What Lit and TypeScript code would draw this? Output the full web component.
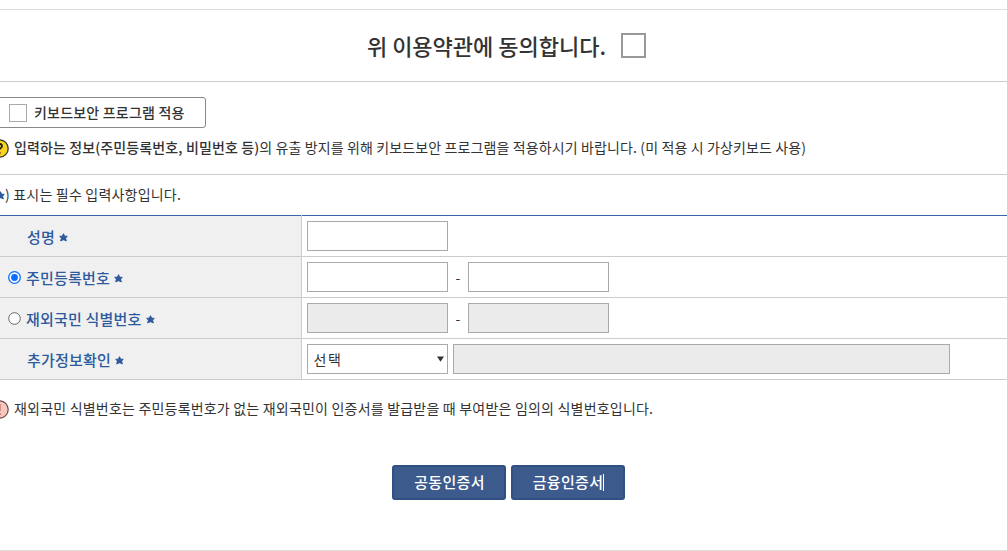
import { LitElement, html, css } from "lit";
import { customElement } from "lit/decorators.js";

@customElement("app-root")
export class AppRoot extends LitElement {
  static styles = css`
    :host { display: block; height: 551px; width: 1007px; overflow: hidden; background: #fff; color: #333;
      font-family: "Noto Sans CJK KR", "Noto Sans", sans-serif; font-size: 14px; }
    * { box-sizing: border-box; }
    .page { padding-top: 9px; height: 551px; display: flex; flex-direction: column; }
    .page > * { flex: none; }
    .agree { height: 73px; border-top: 1px solid #ddd; border-bottom: 1px solid #ccc; display: flex; align-items: center;
      justify-content: center; gap: 15px; padding-left: 6px; }
    .agree span { font-size: 22px; font-weight: 500; color: #333; line-height: 26px; padding-bottom: 2px; }
    .agree i { width: 25px; height: 25px; border: 2px solid #999; display: block; background: #fff; }
    .kb { margin: 15px 0 0 -10px; width: 216px; height: 31px; border: 1px solid #888; border-radius: 3px; display: flex;
      align-items: center; padding-left: 18px; gap: 7px; font-weight: 500; letter-spacing: 0.2px; }
    .kb span { padding-bottom: 2px; }
    .kb i { width: 18px; height: 18px; border: 1px solid #aaa; display: block; }
    .msg { display: flex; align-items: center; gap: 5px; margin-left: -10px; line-height: 20px; white-space: nowrap; }
    .msg span { padding-bottom: 2px; }
    .msg svg { flex: none; width: 19px; height: 19px; }
    .m1 { margin-top: 10px; height: 20px; letter-spacing: 0.12px; }
    .m1 b { font-weight: 500; }
    .hr { border-top: 1px solid #ccc; margin-top: 16px; }
    .req { display: flex; align-items: center; height: 20px; margin-top: 10px; margin-left: -4px; white-space: nowrap; letter-spacing: 0.2px; }
    .req span { padding-bottom: 2px; }
    .sv { width: 9px; height: 9px; flex: none; }
    table { margin-top: 10px; width: 1007px; border-collapse: collapse; border-top: 1px solid #3a66a8; table-layout: fixed; }
    td { height: 41px; border-bottom: 1px solid #ccc; padding: 0; }
    td.l { width: 301px; background: #f0f0f0; border-right: 1px solid #ccc; color: #2c5a9e; font-weight: 500; font-size: 15px; letter-spacing: 0.2px; }
    td.r { padding-left: 5px; }
    .lab { display: flex; align-items: center; gap: 4px; padding-left: 8px; white-space: nowrap; }
    .lab.np { padding-left: 27px; }
    .lab .rd { width: 13px; height: 13px; flex: none; margin-right: 1px; }
    .lab .sv { margin-top: 3px; }
    .cell { display: flex; align-items: center; }
    .inp { width: 141px; height: 30px; border: 1px solid #aaa; background: #fff; }
    .inp.d { background: #ebebeb; }
    .dash { width: 20px; text-align: center; color: #333; padding-left: 1px; }
    .sel { width: 141px; height: 30px; border: 1px solid #aaa; display: flex; align-items: center; padding: 0 3px 0 6px; justify-content: space-between; font-size: 14px; letter-spacing: 1.5px; }
    .sel svg { width: 7px; height: 6px; }
    .wide { width: 497px; margin-left: 5px; height: 30px; border: 1px solid #aaa; background: #ebebeb; }
    .m2 { margin-top: 19px; height: 20px; letter-spacing: 0.2px; }
    .btns { display: flex; gap: 5px; padding-left: 392px; margin-top: 46px; }
    .btn { width: 114px; height: 35px; border: 2px solid #2f4f85; border-radius: 3px; background: #3d5a8c; color: #fff; font-weight: 500;
      font-size: 15px; letter-spacing: 0.3px; display: flex; align-items: center; justify-content: center; padding-left: 1px; }
    .btn span:first-child { padding-bottom: 3px; }
    .caret { display: block; width: 1px; height: 17px; background: #fff; }
    .bottom { margin-top: 50px; border-top: 1px solid #ddd; }
  `;

  private star() {
    return html`<svg class="sv" viewBox="0 0 10 10"><path d="M5 1l1.2 2.7 2.8-.1-1.9 2.1 1 2.9L5 7.2 1.9 8.6l1-2.9L1 3.6l2.8.1z" fill="#2e5a9c" stroke="#2e5a9c" stroke-width="1.2" stroke-linejoin="round"/></svg>`;
  }

  render() {
    return html`<div class="page">
      <div class="agree"><span>위 이용약관에 동의합니다.</span><i></i></div>
      <div class="kb"><i></i><span>키보드보안 프로그램 적용</span></div>
      <div class="msg m1">
        <svg viewBox="0 0 19 19"><circle cx="9.5" cy="9.5" r="8.7" fill="#fbd21e" stroke="#333" stroke-width="1.3"/><path d="M7 7.2c0-3 5-3 5 0 0 1.8-2.5 1.8-2.5 3.6" fill="none" stroke="#222" stroke-width="1.8"/><circle cx="9.5" cy="14" r="1.1" fill="#222"/></svg>
        <span><b>입력하는 정보(주민등록번호, 비밀번호 등)</b>의 유출 방지를 위해 키보드보안 프로그램을 적용하시기 바랍니다. (미 적용 시 가상키보드 사용)</span>
      </div>
      <div class="hr"></div>
      <div class="req">${this.star()}<span>) 표시는 필수 입력사항입니다.</span></div>
      <table>
        <tr>
          <td class="l"><div class="lab np"><span>성명</span>${this.star()}</div></td>
          <td class="r"><div class="cell"><div class="inp"></div></div></td>
        </tr>
        <tr>
          <td class="l"><div class="lab"><svg class="rd" viewBox="0 0 13 13"><circle cx="6.5" cy="6.5" r="5.8" fill="#fff" stroke="#0a6cff" stroke-width="1.3"/><circle cx="6.5" cy="6.5" r="3.4" fill="#0a6cff"/></svg><span>주민등록번호</span>${this.star()}</div></td>
          <td class="r"><div class="cell"><div class="inp"></div><span class="dash">-</span><div class="inp"></div></div></td>
        </tr>
        <tr>
          <td class="l"><div class="lab"><svg class="rd" viewBox="0 0 13 13"><circle cx="6.5" cy="6.5" r="5.8" fill="#fff" stroke="#666" stroke-width="1"/></svg><span>재외국민 식별번호</span>${this.star()}</div></td>
          <td class="r"><div class="cell"><div class="inp d"></div><span class="dash">-</span><div class="inp d"></div></div></td>
        </tr>
        <tr>
          <td class="l"><div class="lab np"><span>추가정보확인</span>${this.star()}</div></td>
          <td class="r"><div class="cell"><div class="sel"><span>선택</span><svg viewBox="0 0 8 6"><path d="M0 0h8L4 6z" fill="#333"/></svg></div><div class="wide"></div></div></td>
        </tr>
      </table>
      <div class="msg m2">
        <svg viewBox="0 0 19 19"><circle cx="9.5" cy="9.5" r="8.7" fill="#f6c9c0" stroke="#6a4a44" stroke-width="1.2"/><path d="M9.5 4v7" stroke="#b03020" stroke-width="1.8"/><circle cx="9.5" cy="14" r="1.1" fill="#b03020"/></svg>
        <span>재외국민 식별번호는 주민등록번호가 없는 재외국민이 인증서를 발급받을 때 부여받은 임의의 식별번호입니다.</span>
      </div>
      <div class="btns">
        <div class="btn"><span>공동인증서</span></div>
        <div class="btn"><span>금융인증서</span><span class="caret"></span></div>
      </div>
      <div class="bottom"></div>
    </div>`;
  }
}
